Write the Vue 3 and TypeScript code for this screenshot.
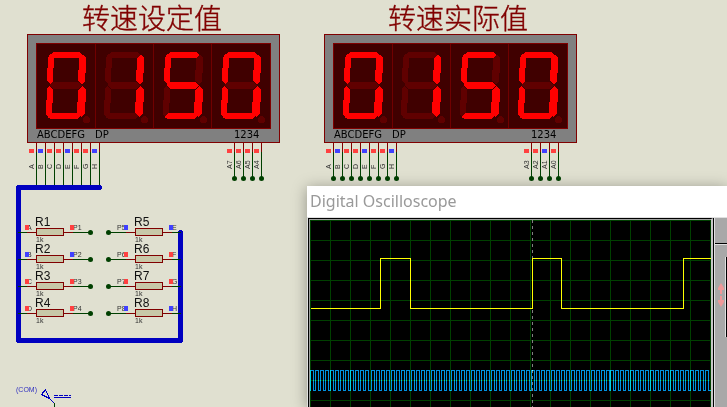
<script setup lang="ts">
type Level = 'high' | 'low'

interface Pin {
  name: string
  level: Level
}

interface Display {
  id: string
  title: string
  titleX: number
  x: number
  segmentPins: Pin[]
  selectPins: Pin[]
  onBus: boolean
}

interface Resistor {
  name: string
  x: number
  y: number
  left: Pin
  right: Pin
  busSide: 'left' | 'right'
}

function pins(names: string[], levels: string): Pin[] {
  return names.map((name, i) => ({ name, level: levels[i] === '1' ? 'high' : 'low' }))
}

const segmentNames = ['A', 'B', 'C', 'D', 'E', 'F', 'G', 'H']

const displays: Display[] = [
  {
    id: 'set', title: '转速设定值', titleX: 82, x: 27, onBus: true,
    segmentPins: pins(segmentNames, '10110110'),
    selectPins: pins(['A7', 'A6', 'A5', 'A4'], '1111'),
  },
  {
    id: 'actual', title: '转速实际值', titleX: 388, x: 324, onBus: false,
    segmentPins: pins(segmentNames, '10110110'),
    selectPins: pins(['A3', 'A2', 'A1', 'A0'], '1101'),
  },
]

// Outlines of the seven segments, relative to the display's corner.
const segments: Record<string, string> = {
  a: '23,21 26,18 52,18 56,21 52,24 26,24',
  b: '56,20 59,24 59,38 58,41 58,47 55,50 51,47 51,38 52,35 52,24',
  c: '55,52 59,55 59,64 58,72 58,80 54,83 50,79 50,71 51,66 51,56',
  d: '20,83 24,79 50,79 53,82 50,85 24,85',
  e: '22,52 26,55 26,66 25,72 25,79 21,83 19,80 19,70 20,63 20,55',
  f: '23,20 27,24 27,32 26,36 26,47 23,50 20,47 20,38 21,31 21,24',
  g: '22,51 26,48 51,48 55,51 51,55 26,55',
}
const lit: Record<string, string> = { '0': 'abcdef', '1': 'bc', '5': 'acdfg' }
const digits = ['0', '1', '5', '0']
const digitX = [0, 58, 117, 175]

function orderedSegments(digit: string): { key: string; on: boolean }[] {
  return Object.keys(segments)
    .map((key) => ({ key, on: lit[digit].includes(key) }))
    .sort((p, q) => Number(p.on) - Number(q.on))
}

const leftLevels = '1011'
const rightLevels = '0110'
const farRightLevels = '0110'
const resistors: Resistor[] = [0, 1, 2, 3].flatMap((row): Resistor[] => {
  const y = 232 + row * 27
  const l: Level = leftLevels[row] === '1' ? 'high' : 'low'
  const r: Level = rightLevels[row] === '1' ? 'high' : 'low'
  const far: Level = farRightLevels[row] === '1' ? 'high' : 'low'
  return [
    {
      name: `R${row + 1}`, x: 36, y, busSide: 'left',
      left: { name: segmentNames[row], level: l },
      right: { name: `P${row + 1}`, level: l },
    },
    {
      name: `R${row + 5}`, x: 135, y, busSide: 'right',
      left: { name: `P${row + 5}`, level: r },
      right: { name: segmentNames[row + 4], level: far },
    },
  ]
})

// Square waves in screen pixels, origin at the plot's corner.
function squareWave(edges: number[], low: number, high: number, end: number): string {
  let d = `M0 ${low}`
  edges.forEach((x, i) => {
    d += ` H${x} V${i % 2 === 0 ? high : low}`
  })
  return `${d} H${end}`
}

const speedTrace = squareWave([70, 100, 222, 251, 373], 88, 38, 402)

const clockEdges: number[] = []
for (let x = 0; x < 400; x += 5) {
  const shift = x >= 60 && x < 300 ? 1 : 0
  clockEdges.push(x + shift, x + shift + 3)
}
const clockTrace = squareWave(clockEdges, 170, 150, 401)
</script>

<template>
  <main class="workspace">
    <svg class="schematic" role="img" aria-label="Schematic">
      <g v-for="d in displays" :key="d.id">
        <text class="title" :x="d.titleX" y="29">{{ d.title }}</text>
        <g :transform="`translate(${d.x} 34)`">
          <rect class="case" x="0.5" y="0.5" width="252" height="108" />
          <rect class="glass" x="9.5" y="9.5" width="234" height="85" />
          <path class="divider" d="M68.5 10V94 M126.5 10V94 M184.5 10V94" />
          <g v-for="(digit, i) in digits" :key="i" :transform="`translate(${digitX[i]} 0)`">
            <polygon
              v-for="s in orderedSegments(digit)"
              :key="s.key"
              :class="s.on ? 'seg-on' : 'seg-off'"
              :points="segments[s.key]"
            />
            <circle class="seg-off" cx="59.5" cy="85.5" r="3.5" />
          </g>
          <text class="legend" x="10" y="104">ABCDEFG</text>
          <text class="legend" x="68" y="104">DP</text>
          <text class="legend" x="207" y="104">1234</text>

          <g v-for="(p, i) in d.segmentPins" :key="p.name" :transform="`translate(${9 + i * 9} 109)`">
            <path class="pin" d="M0.5 0V9" />
            <path class="wire" :d="d.onBus ? 'M0.5 9V43' : 'M0.5 9V35'" />
            <circle v-if="!d.onBus" class="node" cx="0.5" cy="35.5" r="2.5" />
            <rect :class="p.level" x="-7" y="6" width="5" height="4" />
            <text class="net" transform="translate(-2 26) rotate(-90)">{{ p.name }}</text>
          </g>
          <g v-for="(p, i) in d.selectPins" :key="p.name" :transform="`translate(${207 + i * 9} 109)`">
            <path class="pin" d="M0.5 0V9" />
            <path class="wire" d="M0.5 9V35" />
            <circle class="node" cx="0.5" cy="35.5" r="2.5" />
            <rect :class="p.level" x="-7" y="6" width="5" height="4" />
            <text class="net" transform="translate(-2 26) rotate(-90)">{{ p.name }}</text>
          </g>
        </g>
      </g>

      <path class="bus" d="M99.5 187.5H18.5V340.5H180.5V232.5" />

      <g v-for="r in resistors" :key="r.name" :transform="`translate(${r.x} ${r.y})`">
        <path class="pin" d="M-9 0.5H0 M28 0.5H37" />
        <path class="wire" d="M-18 0.5H-9 M37 0.5H46" />
        <template v-if="r.busSide === 'left'">
          <path class="wire" d="M46 0.5H54" />
          <circle class="node" cx="54.5" cy="0.5" r="2.5" />
        </template>
        <template v-else>
          <path class="wire" d="M-26 0.5H-18" />
          <circle class="node" cx="-26.5" cy="0.5" r="2.5" />
        </template>
        <rect class="body" x="0.5" y="-3.5" width="27" height="7" />
        <text class="net" :x="r.busSide === 'left' ? -9 : -18" y="-2">{{ r.left.name }}</text>
        <text class="net" x="37" y="-2">{{ r.right.name }}</text>
        <rect :class="r.left.level" x="-11" y="-7" width="4" height="5" />
        <rect :class="r.right.level" x="34" y="-7" width="4" height="5" />
        <text class="ref" x="-1" y="-6">{{ r.name }}</text>
        <text class="value" x="0" y="10">1k</text>
      </g>

      <g>
        <text class="com" x="16" y="392">(COM)</text>
        <path class="probe" d="M45.5 389.5L41.5 394.5L49.5 398.5Z M49.5 398.5L54.5 403.5" />
        <path class="probe-line" d="M54 397.5H71" />
        <path class="probe-line dashed" d="M54 395.5H71" />
        <path class="wire" d="M54.5 403V420" />
      </g>
    </svg>

    <section class="scope" aria-labelledby="scope-title">
      <h1 id="scope-title" class="scope-title">Digital Oscilloscope</h1>
      <div class="scope-body">
        <div class="screen">
          <svg class="plot" role="img" aria-label="Traces">
            <defs>
              <pattern id="grid" width="20" height="20" patternUnits="userSpaceOnUse">
                <path class="grid-line" d="M0.5 0V20 M0 0.5H20" />
              </pattern>
            </defs>
            <rect width="100%" height="100%" fill="url(#grid)" />
            <path class="cursor" d="M222.5 0V400" />
            <path class="trace clock" :d="clockTrace" transform="translate(0.5 0.5)" />
            <path class="trace speed" :d="speedTrace" transform="translate(0.5 0.5)" />
          </svg>
        </div>
        <aside class="panel">
          <div class="panel-head"></div>
          <div class="panel-controls">
            <svg class="arrow" width="8" height="24" viewBox="0 0 8 24" aria-hidden="true">
              <path d="M4 0L7 5V7H5V11H4V13H5V17H7V19L4 24L1 19V17H3V13H4V11H3V7H1V5Z" />
            </svg>
            <div class="dial"></div>
          </div>
        </aside>
      </div>
    </section>
  </main>
</template>

<style>
body {
  margin: 0;
}
</style>

<style scoped>
.workspace {
  position: relative;
  height: 100vh;
  overflow: hidden;
  background: #e0e0d0;
  font-family: "Liberation Sans", "Noto Sans CJK SC", sans-serif;
}

.schematic {
  display: block;
  width: 100%;
  height: 100%;
  shape-rendering: crispEdges;
}

.title {
  font-family: "Noto Sans CJK SC", sans-serif;
  font-size: 28px;
  font-weight: 300;
  fill: #800000;
  stroke: #800000;
  stroke-width: 0.4;
}

.case {
  fill: #808080;
  stroke: #800000;
}

.glass {
  fill: #400000;
  stroke: #800000;
}

.divider {
  stroke: #700000;
}

.seg-on {
  fill: #ff0000;
}

.seg-off {
  fill: #600000;
}

.legend {
  font-family: "DejaVu Sans", sans-serif;
  font-size: 10px;
  fill: #000000;
}

.pin {
  stroke: #800000;
}

.wire {
  stroke: #004000;
}

.node {
  fill: #004000;
  shape-rendering: auto;
}

.high {
  fill: #ff4040;
}

.low {
  fill: #4040ff;
}

.net,
.value {
  font-size: 7px;
  fill: #303030;
}

.ref {
  font-size: 12px;
  fill: #101010;
}

.body {
  fill: #c8c8a8;
  stroke: #800000;
}

.bus {
  fill: none;
  stroke: #0000c0;
  stroke-width: 5;
  stroke-linecap: round;
  stroke-linejoin: round;
}

.com {
  font-size: 7px;
  fill: #3030c0;
}

.probe {
  fill: none;
  stroke: #0000c0;
}

.probe-line {
  stroke: #0000c0;
}

.dashed {
  stroke-dasharray: 4 1;
}

.scope {
  position: absolute;
  top: 186px;
  right: 0;
  bottom: 0;
  left: 307px;
  display: flex;
  flex-direction: column;
  background: #ffffff;
  box-shadow: 0 2px 14px rgba(0, 0, 0, 0.35);
}

.scope-title {
  margin: 0;
  padding: 0 3px;
  font-family: "Noto Sans", sans-serif;
  font-size: 16px;
  font-weight: 400;
  line-height: 31px;
  color: #999999;
}

.scope-body {
  display: flex;
  flex: 1;
  min-height: 0;
  border-top: 1px solid #e0e0e0;
  border-left: 1px solid #e0e0e0;
}

.screen {
  flex: 1;
  min-width: 0;
  border-top: 1px solid #000000;
  border-left: 1px solid #000000;
  border-right: 2px solid #c8c8c8;
  background: #000000;
}

.plot {
  display: block;
  box-sizing: border-box;
  width: 100%;
  height: 100%;
  border-top: 1px solid #a0a0a0;
  border-left: 1px solid #a0a0a0;
  shape-rendering: crispEdges;
}

.grid-line {
  stroke: #004000;
}

.cursor {
  stroke: #808080;
  stroke-dasharray: 3 3;
}

.trace {
  fill: none;
}

.speed {
  stroke: #ffff00;
}

.clock {
  stroke: #0090e0;
  mix-blend-mode: plus-lighter;
}

.panel {
  display: flex;
  flex-direction: column;
  width: 12px;
  border-left: 1px solid #e0e0e0;
  background: #a8a8a8;
  box-shadow: -1px 0 0 #000000;
  margin-left: 1px;
}

.panel-head {
  height: 25px;
  border-bottom: 1px solid #000000;
}

.panel-controls {
  display: flex;
  flex: 1;
  justify-content: space-between;
  border-top: 1px solid #e0e0e0;
  padding-top: 12px;
}

.arrow {
  margin: 26px 0 0 2px;
  fill: #f09898;
}

.dial {
  width: 1px;
  height: 80px;
  border-left: 1px solid #e0e0e0;
  background: #000000;
}
</style>
